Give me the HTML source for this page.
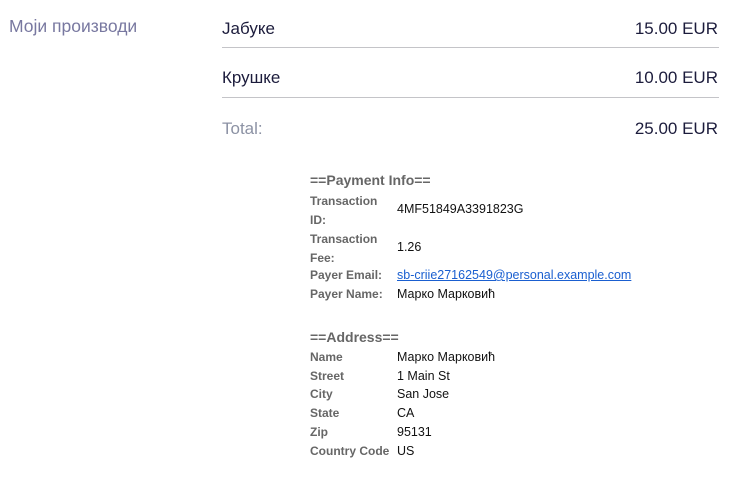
<!DOCTYPE html>
<html><head><meta charset="utf-8"><style>
body{margin:0;width:735px;height:496px;background:#fff;font-family:"Liberation Sans",Arial,sans-serif;position:relative;overflow:hidden}
.a{position:absolute;white-space:nowrap}
.big{font-size:17px;color:#1c1c3c}
.line{position:absolute;left:222px;width:497px;height:1px;background:#c4c4c8}
.l{font-size:12px;font-weight:bold;color:#666}
.v{font-size:12.5px;color:#111}
.h{font-size:14px;font-weight:bold;color:#666}
</style></head><body>
<div class="a" style="left:9px;top:16px;font-size:17.5px;color:#7878a0">Моји производи</div>
<div class="a big" style="left:222px;top:19px">Јабуке</div>
<div class="a big" style="right:17px;top:19px">15.00 EUR</div>
<div class="line" style="top:47px"></div>
<div class="a big" style="left:222px;top:68px">Крушке</div>
<div class="a big" style="right:17px;top:68px">10.00 EUR</div>
<div class="line" style="top:97px"></div>
<div class="a" style="left:222px;top:119px;font-size:17px;color:#8c92a4">Total:</div>
<div class="a big" style="right:17px;top:119px">25.00 EUR</div>

<div class="a h" style="left:310px;top:172px">==Payment Info==</div>
<div class="a l" style="left:310px;top:192px;line-height:19px">Transaction<br>ID:</div>
<div class="a v" style="left:397px;top:202px">4MF51849A3391823G</div>
<div class="a l" style="left:310px;top:230px;line-height:19px">Transaction<br>Fee:</div>
<div class="a v" style="left:397px;top:240px">1.26</div>
<div class="a l" style="left:310px;top:268px">Payer Email:</div>
<div class="a v" style="left:397px;top:268px;color:#1a5fd0;text-decoration:underline">sb-criie27162549@personal.example.com</div>
<div class="a l" style="left:310px;top:287px">Payer Name:</div>
<div class="a v" style="left:397px;top:287px">Марко Марковић</div>

<div class="a h" style="left:310px;top:329px">==Address==</div>
<div class="a l" style="left:310px;top:350px">Name</div><div class="a v" style="left:397px;top:350px">Марко Марковић</div>
<div class="a l" style="left:310px;top:369px">Street</div><div class="a v" style="left:397px;top:369px">1 Main St</div>
<div class="a l" style="left:310px;top:387px">City</div><div class="a v" style="left:397px;top:387px">San Jose</div>
<div class="a l" style="left:310px;top:406px">State</div><div class="a v" style="left:397px;top:406px">CA</div>
<div class="a l" style="left:310px;top:425px">Zip</div><div class="a v" style="left:397px;top:425px">95131</div>
<div class="a l" style="left:310px;top:444px">Country Code</div><div class="a v" style="left:397px;top:444px">US</div>
</body></html>
